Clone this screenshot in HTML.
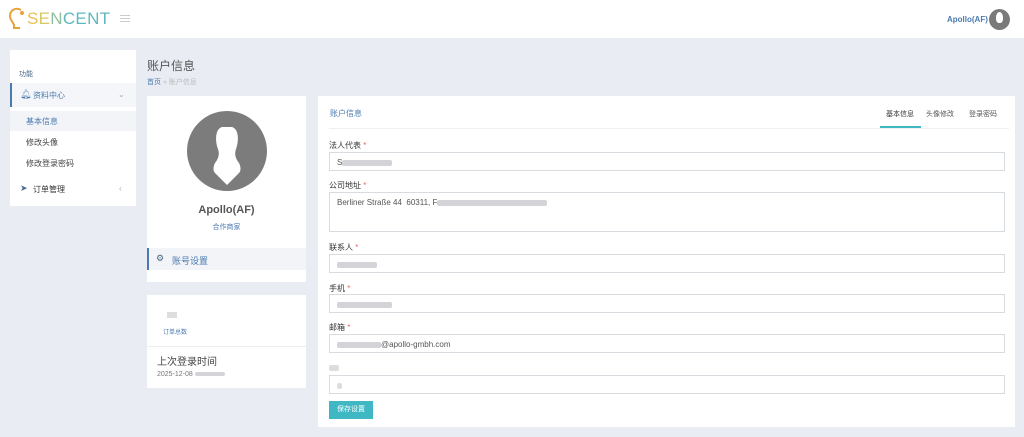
<!DOCTYPE html>
<html><head><meta charset="utf-8"><style>
*{box-sizing:border-box;margin:0;padding:0}
body{width:1024px;height:437px;background:#e9ecf3;font-family:"Liberation Sans","Noto Sans CJK SC",sans-serif;position:relative;overflow:hidden;color:#333}
.a{position:absolute}
.card{position:absolute;background:#fff}
.lbl{position:absolute;left:329px;font-size:8px;color:#333}
.lbl span{color:#e66}
.inp{position:absolute;left:329px;width:676px;height:19px;border:1px solid #d8dbe0;background:#fff;font-size:8px;color:#555;padding:5px 7px}
.blur{display:inline-block;height:6px;background:#d4d4d8;vertical-align:middle;border-radius:2px}
</style></head><body>
<div class="a" style="left:0;top:0;width:1024px;height:38px;background:#fff"></div>
<svg class="a" style="left:8px;top:6px" width="18" height="24"><path d="M13 4 C8 1 2 4 2 10 C2 14 5 16 6 19 L6 22 L12 22" fill="none" stroke="#e8a23c" stroke-width="2"/><circle cx="14" cy="7" r="2" fill="#e8a23c"/></svg>
<div class="a" style="left:27px;top:9px;font-size:17px;letter-spacing:0.3px"><span style="color:#e8c050">S</span><span style="color:#d8c860">E</span><span style="color:#8cbfa0">N</span><span style="color:#5fb7bf">CENT</span></div>
<div class="a" style="left:120px;top:15px;width:10px;height:1px;background:#ccc;box-shadow:0 3px 0 #ccc,0 6px 0 #ccc"></div>
<div class="a" style="left:947px;top:15px;font-size:8px;color:#4a7ab0;font-weight:bold">Apollo(AF)</div>
<div class="a" style="left:989px;top:9px;width:21px;height:21px;border-radius:50%;background:#7a7a7a"></div>
<div class="a" style="left:996px;top:12px;width:7px;height:11px;border-radius:50% 50% 40% 40%;background:#fff"></div>

<div class="card" style="left:10px;top:50px;width:126px;height:156px"></div>
<div class="a" style="left:19px;top:69px;font-size:7px;color:#4a6a8a">功能</div>
<div class="a" style="left:10px;top:83px;width:126px;height:24px;background:#f4f6f9;border-left:2px solid #4a7ab0"></div>
<div class="a" style="left:20px;top:89px;font-size:9px;color:#4a7ab0">🔔︎</div>
<div class="a" style="left:33px;top:90px;font-size:8px;color:#4a7ab0">资料中心</div>
<div class="a" style="left:118px;top:90px;font-size:8px;color:#aaa">⌄</div>
<div class="a" style="left:10px;top:111px;width:126px;height:20px;background:#f2f4f7"></div>
<div class="a" style="left:26px;top:116px;font-size:8px;color:#4a7ab0">基本信息</div>
<div class="a" style="left:26px;top:137px;font-size:8px;color:#444">修改头像</div>
<div class="a" style="left:26px;top:158px;font-size:8px;color:#444">修改登录密码</div>
<div class="a" style="left:20px;top:183px;font-size:9px;color:#4a6a8a">➤</div>
<div class="a" style="left:33px;top:184px;font-size:8px;color:#333">订单管理</div>
<div class="a" style="left:119px;top:184px;font-size:8px;color:#aaa">‹</div>

<div class="a" style="left:147px;top:57px;font-size:12px;color:#555">账户信息</div>
<div class="a" style="left:147px;top:77px;font-size:7px;color:#4a7ab0">首页 <span style="color:#bbb">» 账户信息</span></div>

<div class="card" style="left:147px;top:96px;width:159px;height:186px"></div>
<div class="a" style="left:187px;top:111px;width:80px;height:80px;border-radius:50%;background:#7c7c7c"></div>
<svg class="a" style="left:187px;top:111px" width="80" height="80"><path d="M35 16 C28 18 28 30 31 38 C33 44 31 48 28 52 C26 56 26 60 28 62 L40 74 L52 62 C54 60 54 56 52 52 C49 48 47 44 49 38 C52 30 52 18 45 16 Z" fill="#fff"/></svg>
<div class="a" style="left:147px;top:204px;width:159px;text-align:center;font-size:11px;font-weight:bold;color:#555">Apollo(AF)</div>
<div class="a" style="left:147px;top:222px;width:159px;text-align:center;font-size:7px;color:#4a7ab0">合作商家</div>
<div class="a" style="left:147px;top:248px;width:159px;height:22px;background:#f2f4f7;border-left:2px solid #4a7ab0"></div>
<div class="a" style="left:156px;top:253px;font-size:9px;color:#4a6a8a">⚙</div>
<div class="a" style="left:172px;top:254px;font-size:9px;color:#4a7ab0">账号设置</div>

<div class="card" style="left:147px;top:295px;width:159px;height:93px"></div>
<div class="a" style="left:167px;top:312px;width:10px;height:6px;background:#ddd"></div>
<div class="a" style="left:163px;top:327px;font-size:6px;color:#4a7ab0">订单总数</div>
<div class="a" style="left:147px;top:346px;width:159px;height:1px;background:#eee"></div>
<div class="a" style="left:157px;top:353px;font-size:10px;color:#444">上次登录时间</div>
<div class="a" style="left:157px;top:371px;font-size:7px;color:#777">2025-12-08 <span class="blur" style="width:30px;height:4px"></span></div>

<div class="card" style="left:318px;top:96px;width:697px;height:331px"></div>
<div class="a" style="left:330px;top:108px;font-size:8px;color:#4a7ab0">账户信息</div>
<div class="a" style="left:886px;top:109px;font-size:7px;color:#333">基本信息</div>
<div class="a" style="left:926px;top:109px;font-size:7px;color:#555">头像修改</div>
<div class="a" style="left:969px;top:109px;font-size:7px;color:#555">登录密码</div>
<div class="a" style="left:329px;top:128px;width:680px;height:1px;background:#f0f0f0"></div>
<div class="a" style="left:880px;top:126px;width:41px;height:2px;background:#3fb8c4"></div>

<div class="lbl" style="top:140px">法人代表 <span>*</span></div>
<div class="inp" style="top:152px">S<span class="blur" style="width:50px"></span></div>
<div class="lbl" style="top:180px">公司地址 <span>*</span></div>
<div class="inp" style="top:192px;height:40px">Berliner Straße 44 &nbsp;60311, F<span class="blur" style="width:110px"></span></div>
<div class="lbl" style="top:242px">联系人 <span>*</span></div>
<div class="inp" style="top:254px"><span class="blur" style="width:40px"></span></div>
<div class="lbl" style="top:283px">手机 <span>*</span></div>
<div class="inp" style="top:294px"><span class="blur" style="width:55px"></span></div>
<div class="lbl" style="top:322px">邮箱 <span>*</span></div>
<div class="inp" style="top:334px"><span class="blur" style="width:44px"></span>@apollo-gmbh.com</div>
<div class="lbl" style="top:363px"><span class="blur" style="width:10px;background:#ddd"></span></div>
<div class="inp" style="top:375px"><span class="blur" style="width:5px;background:#ddd"></span></div>
<div class="a" style="left:329px;top:401px;width:44px;height:18px;background:#3fb8c4;color:#fff;font-size:7px;text-align:center;line-height:18px">保存设置</div>
</body></html>
